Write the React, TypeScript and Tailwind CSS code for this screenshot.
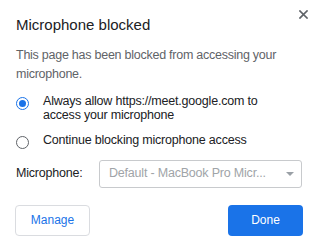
import React from "react";

export default function App() {
  return (
    <div
      className="relative w-[318px] h-[250px] bg-white overflow-hidden"
      style={{ fontFamily: '"Liberation Sans", Arial, sans-serif' }}
    >
      <button className="absolute left-[296px] top-[7.5px] w-[14px] h-[14px] flex items-center justify-center">
        <svg width="9" height="9" viewBox="0 0 9 9">
          <path d="M1 1L8 8M8 1L1 8" stroke="#5f6368" strokeWidth="1.7" strokeLinecap="square" />
        </svg>
      </button>
      <div className="pl-4 pr-4 pt-[15px]">
        <h1 className="text-[15px] leading-[20px] text-[#202124]">Microphone blocked</h1>
        <p className="mt-[11px] text-[12.5px] leading-[19px] tracking-[-0.25px] text-[#5f6368] w-[285px]">
          This page has been blocked from accessing your microphone.
        </p>
        <div className="mt-[10px] flex flex-col gap-[11px]">
          <label className="flex items-start gap-[14px]">
            <span className="mt-[2.5px] w-[13px] h-[13px] rounded-full border-[1.5px] border-[#1a73e8] flex items-center justify-center shrink-0">
              <span className="w-[7px] h-[7px] rounded-full bg-[#1a73e8]" />
            </span>
            <span className="text-[12.5px] leading-[14px] tracking-[-0.2px] text-[#202124]">
              Always allow https://meet.google.com to
              <br />
              access your microphone
            </span>
          </label>
          <label className="flex items-start gap-[14px]">
            <span className="mt-[2.5px] w-[13px] h-[13px] rounded-full border-[1.5px] border-[#5f6368] shrink-0" />
            <span className="text-[12.5px] leading-[14px] tracking-[-0.2px] text-[#202124]">
              Continue blocking microphone access
            </span>
          </label>
        </div>
        <div className="mt-[11px] flex items-center">
          <span className="w-[83px] text-[12.5px] tracking-[-0.2px] text-[#202124]">Microphone:</span>
          <div className="w-[203px] h-[28px] border border-[#c8cacd] rounded-[3px] flex items-center pl-[9px] pr-[7px]">
            <span className="flex-1 text-[12.5px] tracking-[-0.2px] text-[#a0a4a8] whitespace-nowrap overflow-hidden">
              Default - MacBook Pro Micr...
            </span>
            <svg width="8" height="4" viewBox="0 0 8 4">
              <path d="M0 0H8L4 4Z" fill="#9aa0a6" />
            </svg>
          </div>
        </div>
        <div className="mt-[17px] -ml-[1px] flex justify-between w-[288px]">
          <button className="w-[75px] h-[31px] border border-[#dadce0] rounded-[4px] text-[12px] text-[#1a73e8] bg-white">
            Manage
          </button>
          <button className="w-[75px] h-[31px] rounded-[4px] text-[12px] text-white bg-[#1a73e8]">
            Done
          </button>
        </div>
      </div>
    </div>
  );
}
